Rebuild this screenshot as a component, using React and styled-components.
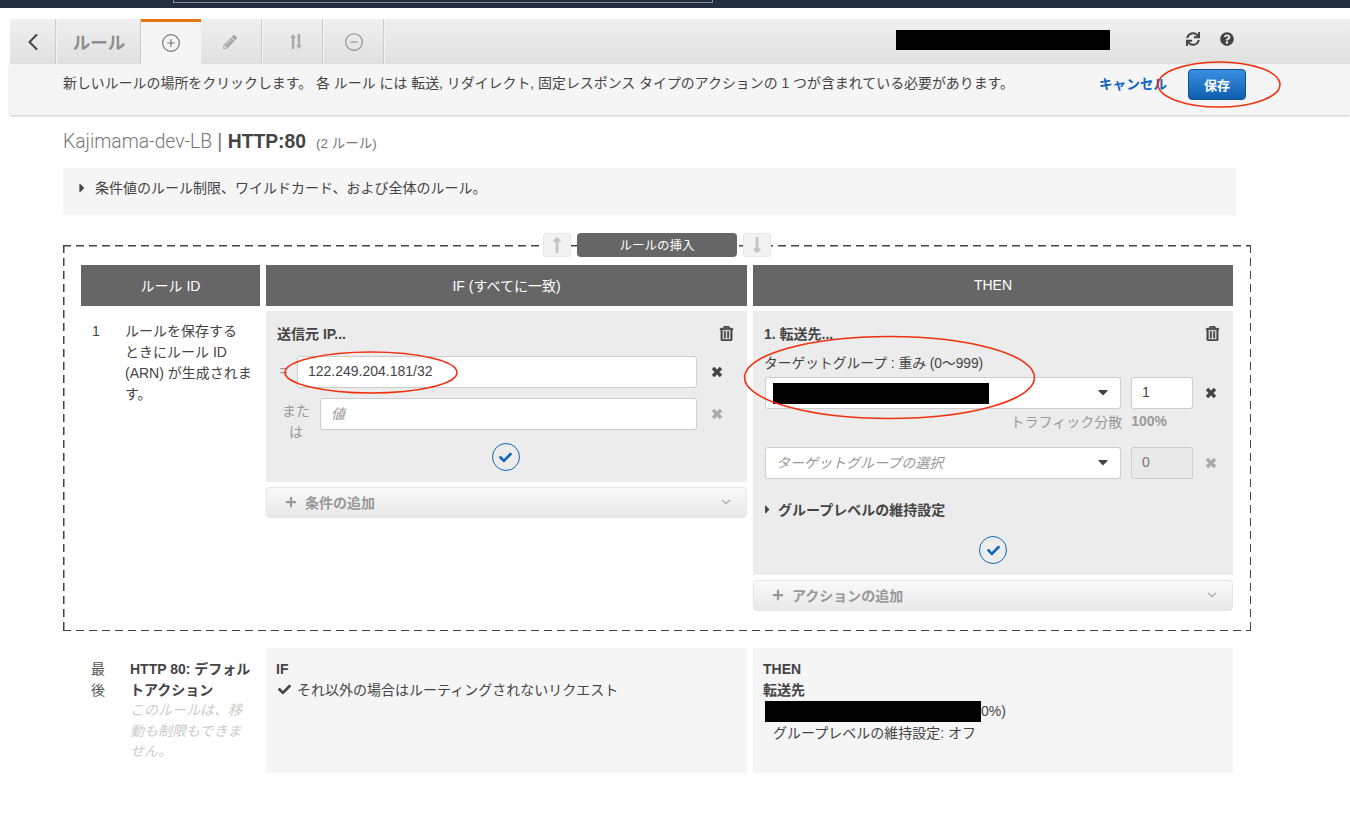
import React from "react";
import styled, { createGlobalStyle } from "styled-components";
import {
  FaSync, FaQuestionCircle, FaRegTrashAlt, FaCheck, FaPlus, FaPencilAlt, FaCaretRight, FaCaretDown,
  FaLongArrowAltUp, FaLongArrowAltDown,
} from "react-icons/fa";
import { ChevronLeft, ChevronDown, CirclePlus, CircleMinus } from "lucide-react";

const Global = createGlobalStyle`
  html, body { margin: 0; padding: 0; background: #fff; }
  body {
    font-family: "Liberation Sans", "Noto Sans CJK JP", sans-serif;
    font-size: 14px;
    color: #444;
  }
  * { box-sizing: border-box; }
`;

const Page = styled.div`
  position: relative;
  width: 1350px;
  height: 824px;
  overflow: hidden;
`;
const TopBar = styled.div`
  height: 8px;
  background: #232f3e;
  padding-left: 173px;
`;
const TopInput = styled.div`
  width: 540px;
  height: 3px;
  border: 1px solid #8a8f96;
  border-top: 0;
  background: #232f3e;
`;
const Toolbar = styled.div`
  margin: 11px 0 0 10px;
  height: 45px;
  display: flex;
  background: linear-gradient(#f0f0f0, #e0e0e0);
`;
const Tab = styled.div`
  width: ${(p) => p.$w}px;
  margin-right: ${(p) => p.$gap ?? 3}px;
  padding: 0 ${(p) => p.$pr ?? 0}px 0 ${(p) => p.$pl ?? 0}px;
  display: flex;
  align-items: center;
  justify-content: center;
  color: ${(p) => (p.$dark ? "#444" : "#a6a6a6")};
  border-right: ${(p) => (p.$active ? "0" : "1px solid #ccc")};
  box-shadow: ${(p) => (p.$active ? "none" : "1px 0 0 #f4f4f4")};
  background: ${(p) => (p.$active ? "#f5f5f5" : "transparent")};
  border-top: ${(p) => (p.$active ? "3px solid #e47911" : "0")};
`;
const TabTitle = styled.span`
  font-size: 17.5px;
  font-weight: 700;
  color: #8e8e8e;
  padding-right: 2px;
`;
const Spacer = styled.div`
  flex: 1;
`;
const Redaction = styled.div`
  width: ${(p) => p.$w}px;
  height: ${(p) => p.$h}px;
  background: #000;
  flex: none;
`;
const ToolRedaction = styled(Redaction)`
  align-self: flex-start;
  margin: 11px 76px 0 0;
`;
const ToolIcons = styled.div`
  display: flex;
  gap: 20px;
  margin: 13px 116px 0 0;
  align-self: flex-start;
  color: #444;
`;
const Message = styled.div`
  margin-left: 10px;
  height: 51px;
  padding: 5px 104px 0 53px;
  background: #f5f5f5;
  box-shadow: 0 1px 2px rgba(0, 0, 0, 0.22);
  display: flex;
  align-items: flex-start;
`;
const MessageText = styled.div`
  flex: 1;
  font-size: 13.93px;
  line-height: 29px;
`;
const Cancel = styled.a`
  font-size: 13.6px;
  font-weight: 700;
  color: #1166bb;
  line-height: 31px;
  margin-right: 21px;
`;
const SaveButton = styled.button`
  width: 58px;
  height: 31px;
  border-radius: 4px;
  border: 1px solid #12508f;
  background: linear-gradient(#3a8fe2, #0f5fb0);
  color: #fff;
  font: 700 13px "Liberation Sans", "Noto Sans CJK JP", sans-serif;
  padding: 0;
`;
const Content = styled.div`
  padding-left: 63px;
`;
const Heading = styled.div`
  margin-top: 15px;
  height: 24px;
  line-height: 24px;
  font-size: 19.3px;
  color: #777;
  white-space: nowrap;
`;
const HeadName = styled.span`
  font-family: "Roboto", "Liberation Sans", sans-serif;
  font-weight: 300;
`;
const HeadStrong = styled.b`
  color: #444;
`;
const HeadCount = styled.span`
  font-size: 13.5px;
  margin-left: 10px;
  color: #777;
`;
const InfoBox = styled.div`
  margin-top: 14px;
  width: 1173px;
  height: 47px;
  background: #f5f5f5;
  padding: 9px 0 0 16px;
  display: flex;
  align-items: flex-start;
  gap: 6px;
  line-height: 22px;
`;
const Caret = styled.span`
  display: inline-flex;
  align-items: center;
  height: 22px;
  width: 14px;
  margin-left: -4px;
  color: #444;
`;
const DashedBox = styled.div`
  position: relative;
  margin-top: 30px;
  width: 1188px;
  height: 386px;
  padding: 20px 18px 0;
  background-image:
    repeating-linear-gradient(to right, #444 0 8px, transparent 8px 13px),
    repeating-linear-gradient(to right, #444 0 8px, transparent 8px 13px),
    repeating-linear-gradient(to bottom, #444 0 8px, transparent 8px 13px),
    repeating-linear-gradient(to bottom, #444 0 8px, transparent 8px 13px);
  background-size: 100% 1.5px, 100% 1.5px, 1.5px 100%, 1.5px 100%;
  background-position: 0 0, 0 100%, 0 0, 100% 0;
  background-repeat: no-repeat;
`;
const InsertBar = styled.div`
  position: absolute;
  left: 480px;
  top: -12px;
  display: flex;
  gap: 6px;
`;
const ArrowBtn = styled.div`
  width: 28px;
  height: 24px;
  border-radius: 3px;
  background: #f2f2f2;
  border: 1px solid #e6e6e6;
  display: flex;
  align-items: center;
  justify-content: center;
  color: #c4c4c4;
`;
const InsertBtn = styled.div`
  width: 160px;
  height: 24px;
  border-radius: 4px;
  background: #666;
  color: #fff;
  font-size: 12.5px;
  display: flex;
  align-items: center;
  justify-content: center;
  padding-bottom: 1px;
`;
const Grid = styled.div`
  display: grid;
  grid-template-columns: 179px 481px 480px;
  column-gap: 6px;
`;
const HeadCell = styled.div`
  height: 41px;
  background: #666;
  color: #fff;
  display: flex;
  align-items: center;
  justify-content: center;
  padding-bottom: 2px;
  margin-bottom: 5px;
`;
const IdCell = styled.div`
  display: flex;
  padding: 10px 8px 0 11px;
  line-height: 21px;
  white-space: nowrap;
`;
const IdNum = styled.div`
  width: 33px;
  flex: none;
`;
const Column = styled.div`
  display: flex;
  flex-direction: column;
  gap: 5px;
`;
const Panel = styled.div`
  background: #ececec;
  padding: 11px ${(p) => p.$side ?? 11}px;
`;
const PanelHead = styled.div`
  height: 22px;
  display: flex;
  align-items: center;
  justify-content: space-between;
  font-weight: 700;
  color: #444;
  padding-right: ${(p) => p.$pr ?? 2}px;
  margin-left: ${(p) => p.$ml ?? 0}px;
`;
const TrashIcon = styled(FaRegTrashAlt)`
  stroke: currentColor;
  stroke-width: 20;
`;
const FieldRow = styled.div`
  display: flex;
  align-items: flex-start;
  margin-top: ${(p) => p.$top ?? 10}px;
`;
const OpLabel = styled.div`
  width: ${(p) => p.$w}px;
  flex: none;
  line-height: 21px;
  color: #999;
  text-align: center;
  padding: ${(p) => p.$pad ?? 5}px ${(p) => p.$pr ?? 0}px 0 0;
  margin: 0 ${(p) => p.$mr ?? 0}px 0 ${(p) => p.$ml ?? 0}px;
`;
const TextInput = styled.div`
  flex: none;
  width: ${(p) => p.$w}px;
  height: 32px;
  margin-left: ${(p) => p.$ml ?? 0}px;
  display: flex;
  align-items: center;
  padding: 0 0 2px 10px;
  background: ${(p) => (p.$disabled ? "#e9e9e9" : "#fff")};
  border: 1px solid #ccc;
  border-radius: 3px;
  color: ${(p) => (p.$disabled ? "#777" : p.$placeholder ? "#999" : "#444")};
  font-style: ${(p) => (p.$placeholder ? "italic" : "normal")};
`;
const SelectBox = styled(TextInput)`
  justify-content: space-between;
  padding-right: 9px;
`;
const RemoveIcon = styled.div`
  width: ${(p) => p.$w ?? 40}px;
  flex: none;
  height: 32px;
  display: flex;
  align-items: center;
  justify-content: center;
  color: ${(p) => (p.$muted ? "#aaa" : "#444")};
`;
const ConfirmRow = styled.div`
  display: flex;
  justify-content: center;
  margin-top: ${(p) => p.$top ?? 13}px;
`;
const Confirm = styled.div`
  width: 28px;
  height: 28px;
  margin-left: ${(p) => p.$ml ?? 0}px;
  border-radius: 50%;
  border: 1px solid #1166bb;
  display: flex;
  align-items: center;
  justify-content: center;
  color: #1166bb;
`;
const AddButton = styled.div`
  height: 31px;
  display: flex;
  align-items: center;
  padding: 0 13px 2px 18px;
  gap: 8px;
  border: 1px solid #e6e6e6;
  border-radius: 4px;
  background: linear-gradient(#fafafa, #e8e8e8);
  color: #999;
  font-weight: 700;
`;
const AddLabel = styled.span`
  flex: 1;
`;
const WeightLabel = styled.div`
  height: 20px;
  line-height: 20px;
  font-size: 13.75px;
  margin: 10px 0 3px -1px;
`;
const Traffic = styled.div`
  display: flex;
  justify-content: flex-end;
  align-items: center;
  height: 20px;
  margin-top: 2px;
  padding-right: 54px;
  gap: 9px;
  color: #999;
`;
const TrafficPct = styled.b`
  color: #999;
`;
const DetailsRow = styled.div`
  display: flex;
  align-items: center;
  gap: 3px;
  margin-top: 20px;
  height: 22px;
  padding-bottom: 2px;
  font-weight: 700;
`;
const SelectRedaction = styled(Redaction)`
  margin: 2px 0 0 -3px;
`;
const Bottom = styled(Grid)`
  margin: 17px 0 0 18px;
  width: 1152px;
  line-height: 20.5px;
`;
const BottomId = styled.div`
  display: flex;
  padding: 11px 8px 0 10px;
`;
const LastLabel = styled.div`
  width: 14px;
  flex: none;
  margin-right: 25px;
  color: #555;
`;
const BottomName = styled.div`
  font-weight: 700;
  color: #444;
`;
const BottomNote = styled.div`
  font-style: italic;
  font-weight: 400;
  color: #ccc;
`;
const BottomCell = styled.div`
  height: 125px;
  background: #f5f5f5;
  padding: 11px 10px;
`;
const Strong = styled.div`
  font-weight: 700;
  color: #444;
`;
const CheckLine = styled.div`
  display: flex;
  align-items: center;
  gap: 6px;
  padding-left: 2px;
`;
const RedactLine = styled.div`
  display: flex;
  align-items: center;
  height: 21px;
  margin: 1px 0 0 2px;
`;
const Indent = styled.div`
  margin-top: 1px;
  padding-left: 10px;
`;
const Annotations = styled.svg`
  position: absolute;
  left: 0;
  top: 0;
  pointer-events: none;
`;

const SortIcon = () => (
  <svg width="12" height="15" viewBox="0 0 14 18" fill="#aaa">
    <path d="M3.5 0 L7 4.5 H5 V18 H2 V4.5 H0 Z" />
    <path d="M10.5 18 L7 13.5 H9 V0 H12 V13.5 H14 Z" />
  </svg>
);
const CrossIcon = () => (
  <svg width="12" height="12" viewBox="0 0 12 12" fill="none" stroke="currentColor" strokeWidth="3.4">
    <path d="M2 2 L10 10 M10 2 L2 10" />
  </svg>
);

export default function App() {
  return (
    <Page>
      <Global />
      <TopBar><TopInput /></TopBar>
      <Toolbar>
        <Tab $w={46} $gap={4} $dark><ChevronLeft size={28} strokeWidth={1.8} /></Tab>
        <Tab $w={81} $gap={0}><TabTitle>ルール</TabTitle></Tab>
        <Tab $w={60} $gap={4} $active><CirclePlus size={20} strokeWidth={1.4} color="#777" /></Tab>
        <Tab $w={57} $gap={3} $pr={6}><FaPencilAlt size={14} /></Tab>
        <Tab $w={58} $gap={4} $pl={4}><SortIcon /></Tab>
        <Tab $w={57} $gap={3} $pr={3}><CircleMinus size={20} strokeWidth={1.3} color="#888" /></Tab>
        <Spacer />
        <ToolRedaction $w={214} $h={20} />
        <ToolIcons>
          <FaSync size={14} />
          <FaQuestionCircle size={14} />
        </ToolIcons>
      </Toolbar>
      <Message>
        <MessageText>新しいルールの場所をクリックします。 各 ルール には 転送, リダイレクト, 固定レスポンス タイプのアクションの 1 つが含まれている必要があります。</MessageText>
        <Cancel>キャンセル</Cancel>
        <SaveButton>保存</SaveButton>
      </Message>
      <Content>
        <Heading>
          <HeadName>Kajimama-dev-LB</HeadName> | <HeadStrong>HTTP:80</HeadStrong>
          <HeadCount>(2 ルール)</HeadCount>
        </Heading>
        <InfoBox>
          <Caret><FaCaretRight size={14} /></Caret>
          <span>条件値のルール制限、ワイルドカード、および全体のルール。</span>
        </InfoBox>
        <DashedBox>
          <InsertBar>
            <ArrowBtn><FaLongArrowAltUp size={18} /></ArrowBtn>
            <InsertBtn>ルールの挿入</InsertBtn>
            <ArrowBtn><FaLongArrowAltDown size={18} /></ArrowBtn>
          </InsertBar>
          <Grid>
            <HeadCell>ルール ID</HeadCell>
            <HeadCell>IF (すべてに一致)</HeadCell>
            <HeadCell>THEN</HeadCell>
            <IdCell>
              <IdNum>1</IdNum>
              <div>ルールを保存する<br />ときにルール ID<br />(ARN) が生成されま<br />す。</div>
            </IdCell>
            <Column>
              <Panel>
                <PanelHead>送信元 IP...<TrashIcon size={15} /></PanelHead>
                <FieldRow $top={12}>
                  <OpLabel $w={20} $pr={7}>=</OpLabel>
                  <TextInput $w={400}>122.249.204.181/32</TextInput>
                  <RemoveIcon><CrossIcon /></RemoveIcon>
                </FieldRow>
                <FieldRow>
                  <OpLabel $w={30} $ml={4} $mr={9} $pad={3}>または</OpLabel>
                  <TextInput $w={377} $placeholder>値</TextInput>
                  <RemoveIcon $muted><CrossIcon /></RemoveIcon>
                </FieldRow>
                <ConfirmRow $top={0}>
                  <Confirm $ml={-2}><FaCheck size={13} /></Confirm>
                </ConfirmRow>
              </Panel>
              <AddButton>
                <FaPlus size={12} />
                <AddLabel>条件の追加</AddLabel>
                <ChevronDown size={14} color="#aaa" />
              </AddButton>
            </Column>
            <Column>
              <Panel $side={12}>
                <PanelHead $ml={-1} $pr={1}>1. 転送先...<TrashIcon size={15} /></PanelHead>
                <WeightLabel>ターゲットグループ : 重み (0〜999)</WeightLabel>
                <FieldRow $top={0}>
                  <SelectBox $w={356}>
                    <SelectRedaction $w={216} $h={21} />
                    <FaCaretDown size={16} />
                  </SelectBox>
                  <TextInput $w={62} $ml={10}>1</TextInput>
                  <RemoveIcon $w={36}><CrossIcon /></RemoveIcon>
                </FieldRow>
                <Traffic>トラフィック分散<TrafficPct>100%</TrafficPct></Traffic>
                <FieldRow $top={16}>
                  <SelectBox $w={356} $placeholder>
                    ターゲットグループの選択
                    <FaCaretDown size={16} color="#444" />
                  </SelectBox>
                  <TextInput $w={62} $ml={10} $disabled>0</TextInput>
                  <RemoveIcon $w={36} $muted><CrossIcon /></RemoveIcon>
                </FieldRow>
                <DetailsRow><Caret><FaCaretRight size={13} /></Caret>グループレベルの維持設定</DetailsRow>
                <ConfirmRow $top={15}>
                  <Confirm><FaCheck size={13} /></Confirm>
                </ConfirmRow>
              </Panel>
              <AddButton>
                <FaPlus size={12} />
                <AddLabel>アクションの追加</AddLabel>
                <ChevronDown size={14} color="#aaa" />
              </AddButton>
            </Column>
          </Grid>
        </DashedBox>
        <Bottom>
          <BottomId>
            <LastLabel>最後</LastLabel>
            <div>
              <BottomName>HTTP 80: デフォルトアクション</BottomName>
              <BottomNote>このルールは、移動も制限もできません。</BottomNote>
            </div>
          </BottomId>
          <BottomCell>
            <Strong>IF</Strong>
            <CheckLine><FaCheck size={13} />それ以外の場合はルーティングされないリクエスト</CheckLine>
          </BottomCell>
          <BottomCell>
            <Strong>THEN</Strong>
            <Strong>転送先</Strong>
            <RedactLine><Redaction $w={216} $h={21} />0%)</RedactLine>
            <Indent>グループレベルの維持設定: オフ</Indent>
          </BottomCell>
        </Bottom>
      </Content>
      <Annotations width="1350" height="824" fill="none" stroke="#f0300f" strokeWidth="1.6">
        <ellipse cx="1219" cy="84.5" rx="61" ry="22.5" />
        <ellipse cx="371" cy="372.5" rx="86" ry="20.5" />
        <ellipse cx="889.5" cy="377.5" rx="145" ry="41" />
      </Annotations>
    </Page>
  );
}
